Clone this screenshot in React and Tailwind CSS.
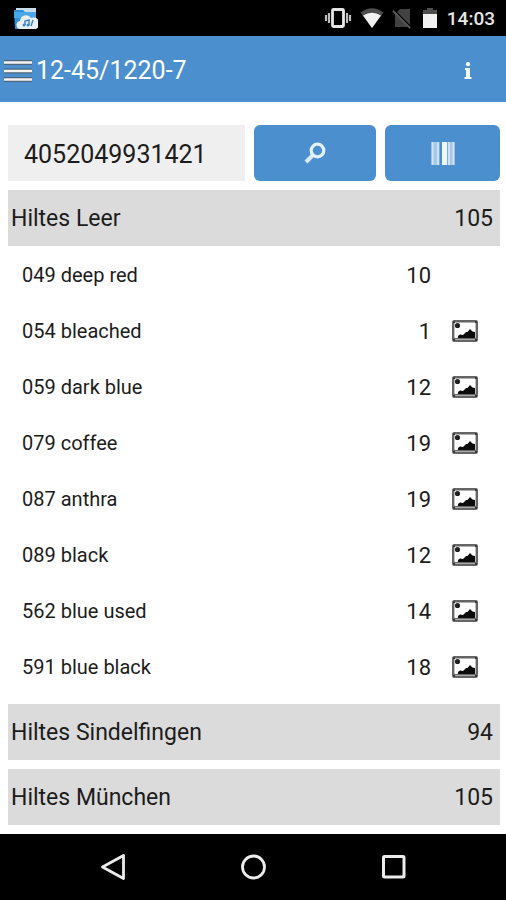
import { useState } from "react"

const initialStores = [
  {
    name: "Hiltes Leer",
    total: 105,
    colors: [
      { code: "049", name: "deep red", quantity: 10, hasImage: false },
      { code: "054", name: "bleached", quantity: 1, hasImage: true },
      { code: "059", name: "dark blue", quantity: 12, hasImage: true },
      { code: "079", name: "coffee", quantity: 19, hasImage: true },
      { code: "087", name: "anthra", quantity: 19, hasImage: true },
      { code: "089", name: "black", quantity: 12, hasImage: true },
      { code: "562", name: "blue used", quantity: 14, hasImage: true },
      { code: "591", name: "blue black", quantity: 18, hasImage: true },
    ],
  },
  { name: "Hiltes Sindelfingen", total: 94, colors: [] },
  { name: "Hiltes München", total: 105, colors: [] },
]

const FolderIcon = () => (
  <svg className="w-6 h-6" viewBox="0 0 24 24">
    <path d="M2 2h20v6H2z" fill="#c9dcea" />
    <path d="M0 4h9l2 2h11v17H1z" fill="#2e8fdc" />
    <path d="M0 6h22v6H0z" fill="#4ba6e8" />
    <path d="M7 23a4 4 0 0 1-1-8a6 6 0 0 1 11-3a6 6 0 0 1 5 11z" fill="#e9eff4" />
    <path d="M11 19v-4l4-1v5M19 14l-2 6" fill="none" stroke="#3b87c8" strokeWidth="1.500" />
    <circle cx="10" cy="19" r="1.500" fill="#3b87c8" />
    <circle cx="14" cy="19" r="1.500" fill="#3b87c8" />
  </svg>
)

const VibrateIcon = () => (
  <svg className="w-7 h-6" viewBox="0 0 28 24">
    <rect x="8.500" y="3.500" width="11" height="17" rx="1" fill="none" stroke="#e6e6e6" strokeWidth="2.800" />
    <path d="M2 9v6M5 7v10M26 9v6M23 7v10" stroke="#bdbdbd" strokeWidth="2.200" />
  </svg>
)

const WifiIcon = () => (
  <svg className="w-6 h-6" viewBox="0 0 24 24">
    <path d="M12 22L.500 6.500Q12-2 23.500 6.500z" fill="#4d4d4d" />
    <path d="M12 22L3 9.500Q12 4 21 9.500z" fill="#f2f2f2" />
  </svg>
)

const NoSimIcon = () => (
  <svg className="w-5 h-6" viewBox="0 0 20 24">
    <path d="M8 3h10v18H3V8z" fill="#424242" />
    <path d="M0 3l19 19" stroke="#000" strokeWidth="3" />
    <path d="M1 5l17 17" stroke="#5a5a5a" strokeWidth="1.800" />
  </svg>
)

const BatteryIcon = () => (
  <svg className="w-4 h-6" viewBox="0 0 16 24">
    <path d="M5 2h6v2h4v5H1V4h4z" fill="#4d4d4d" />
    <path d="M1 8h14v14H1z" fill="#f2f2f2" />
  </svg>
)

const MenuIcon = () => (
  <svg className="w-7 h-6" viewBox="0 0 28 24">
    <path d="M0 3.500h28M0 12h28M0 20.500h28" stroke="#4e6478" strokeWidth="5" />
    <path d="M0 3.500h28M0 12h28M0 20.500h28" stroke="#f3f3f3" strokeWidth="2.600" />
  </svg>
)

const InfoIcon = () => (
  <svg className="w-2 h-5" viewBox="0 0 8 20">
    <circle cx="4" cy="3.200" r="2.100" fill="#f4f9fd" />
    <path d="M1 7h5v9h1.500v2h-7v-2H2V9H1z" fill="#f4f9fd" />
  </svg>
)

const SearchIcon = () => (
  <svg className="w-6 h-6" viewBox="0 0 24 24">
    <path d="M10 14l-7 7" stroke="#dcebf8" strokeWidth="4" />
    <circle cx="14.500" cy="9.500" r="6.300" fill="none" stroke="#e4f0fa" strokeWidth="3.200" />
  </svg>
)

const BarcodeIcon = () => (
  <svg className="w-6 h-6" viewBox="0 0 24 24">
    <path d="M.500 1h8v23h-8zM16.500 1h7v23h-7z" fill="#a5c9ea" />
    <path d="M11 1h5v23h-5z" fill="#eef5fc" />
    <path d="M1.500 1v23M7 1v23M18 1v23M22.500 1v23" stroke="#d3e5f5" strokeWidth="1.800" />
  </svg>
)

const PictureIcon = () => (
  <svg className="w-[26px] h-[22px]" viewBox="0 0 26 22">
    <rect x="1.200" y="1.200" width="23.600" height="19.600" rx="1" fill="#fff" stroke="#666" strokeWidth="2.400" />
    <circle cx="5.500" cy="5.500" r="2.600" fill="#1f1f1f" />
    <path d="M6 19v-3l2-1.500 3 .500 3-3h1.500l2.500-3 2.500 2.500 2.500.500v7z" fill="#0a0a0a" />
    <path d="M2 18.500h22" stroke="#666" strokeWidth="1.200" />
    <path d="M1 1h2v2H1zM23 1h2v2h-2zM1 19h2v2H1zM23 19h2v2h-2z" fill="#3a3a3a" />
  </svg>
)

const StatusBar = () => (
  <div className="flex items-center justify-between h-9 pl-3.5 pr-[11px] bg-black">
    <FolderIcon />
    <div className="flex items-center gap-2">
      <VibrateIcon />
      <WifiIcon />
      <NoSimIcon />
      <div className="flex items-center gap-[9px] pl-0.5">
        <BatteryIcon />
        <span className="text-[19px] font-medium pt-0.5 text-[#e6e6e6]">14:03</span>
      </div>
    </div>
  </div>
)

const StoreSection = ({ store, open, onToggle }) => (
  <section>
    <button
      onClick={onToggle}
      aria-expanded={open}
      className="flex items-center justify-between w-full h-14 pt-[3px] pl-[3px] pr-[7px] bg-[#dbdbdb] text-[23px] text-[#1c1c1c]"
    >
      <span>{store.name}</span>
      <span>{store.total}</span>
    </button>
    {open && store.colors.length > 0 && (
      <table className="w-full mt-px text-[#1c1c1c]">
        <tbody>
          {store.colors.map((color) => (
            <tr key={color.code} className="h-14">
              <td className="pl-3.5 text-xl">
                {color.code} {color.name}
              </td>
              <td className="text-right text-[22px]">{color.quantity}</td>
              <td className="w-[69px] pl-[21px]">
                {color.hasImage && (
                  <button aria-label={`Show ${color.name}`} className="block">
                    <PictureIcon />
                  </button>
                )}
              </td>
            </tr>
          ))}
        </tbody>
      </table>
    )}
  </section>
)

const App = () => {
  const [articleNumber, setArticleNumber] = useState("4052049931421")
  const [openStore, setOpenStore] = useState("Hiltes Leer")

  return (
    <div className="flex flex-col min-h-screen bg-white font-[Roboto,sans-serif]">
      <StatusBar />

      <header className="flex items-center h-[66px] pt-[3px] pl-1 pr-[34px] bg-[#4b8fce] text-white">
        <button aria-label="Menu">
          <MenuIcon />
        </button>
        <h1 className="flex-1 pl-1 text-[25px]">12-45/1220-7</h1>
        <button aria-label="Info">
          <InfoIcon />
        </button>
      </header>

      <main className="flex flex-col flex-1 gap-[9px] pt-[23px] pb-[9px] pl-2 pr-1.5">
        <form className="flex h-14 gap-[9px]" onSubmit={(e) => e.preventDefault()}>
          <input
            type="text"
            aria-label="Article number"
            value={articleNumber}
            onChange={(e) => setArticleNumber(e.target.value)}
            className="flex-1 min-w-0 px-4 pt-[3px] bg-[#efefef] text-[25px] text-[#1c1c1c] focus:outline-none"
          />
          <button
            type="submit"
            aria-label="Search"
            className="flex items-center justify-center w-[122px] rounded-md bg-[#4b8fce]"
          >
            <SearchIcon />
          </button>
          <button
            type="button"
            aria-label="Scan barcode"
            className="flex items-center justify-center w-[115px] rounded-md bg-[#4b8fce]"
          >
            <BarcodeIcon />
          </button>
        </form>

        {initialStores.map((store) => (
          <StoreSection
            key={store.name}
            store={store}
            open={openStore === store.name}
            onToggle={() => setOpenStore(openStore === store.name ? null : store.name)}
          />
        ))}
      </main>

      <nav className="grid grid-cols-3 h-[66px] px-[43px] bg-black">
        <button aria-label="Back" className="flex items-center justify-center">
          <svg className="w-7 h-7" viewBox="0 0 28 28">
            <path d="M24.500 2.500v23L3.500 14z" fill="none" stroke="#ececec" strokeWidth="2.800" strokeLinejoin="round" />
          </svg>
        </button>
        <button aria-label="Home" className="flex items-center justify-center">
          <svg className="w-7 h-7" viewBox="0 0 28 28">
            <circle cx="14.500" cy="14" r="11" fill="none" stroke="#ececec" strokeWidth="2.800" />
          </svg>
        </button>
        <button aria-label="Recent apps" className="flex items-center justify-center">
          <svg className="w-7 h-7" viewBox="0 0 28 28">
            <rect x="4.500" y="3.500" width="20.500" height="20.500" rx="1" fill="none" stroke="#ececec" strokeWidth="3" />
          </svg>
        </button>
      </nav>
    </div>
  )
}

export default App
